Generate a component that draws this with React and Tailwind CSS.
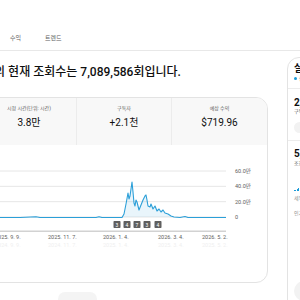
const pts = [
  [-18, 217.5], [20, 217.5], [36, 216.8], [40, 217.5], [96, 217.5], [99, 216.8], [102, 217.5],
  [122, 217.5], [124, 214], [126, 204], [128, 193], [129, 199], [130, 196], [132, 182],
  [133, 192], [134, 203], [135, 206], [136, 200], [137, 202], [139, 210], [141, 205],
  [143, 200], [145, 196], [146, 195], [147, 200], [148, 206], [150, 207], [151, 204],
  [153, 209], [155, 206], [157, 211], [159, 209], [161, 212], [163, 210], [165, 213],
  [168, 214], [171, 216], [174, 217], [180, 217.5], [185, 216.5], [188, 217.5], [226, 217.5],
];

const toSvg = ([x, y]) => [x + 18, y - 167];

const linePath = pts
  .map((p, i) => {
    const [x, y] = toSvg(p);
    return `${i === 0 ? "M" : "L"}${x} ${y}`;
  })
  .join(" ");

const areaPath = `${linePath} L244 50 L0 50 Z`;

const markers = [
  { x: 117, n: "3" },
  { x: 127, n: "4" },
  { x: 137, n: "7" },
  { x: 147, n: "3" },
  { x: 158, n: "4" },
];

const metrics = [
  { label: "시청 시간(단위: 시간)", value: "3.8만" },
  { label: "구독자", value: "+2.1천" },
  { label: "예상 수익", value: "$719.96" },
];

const DateRow = ({ labels, color }) => (
  <div className={`flex w-[244px] pl-[13px] whitespace-nowrap text-[5.5px] leading-[8px] ${color}`}>
    <span className="w-[53px] flex-none">{labels[0]}</span>
    <span className="w-[55px] flex-none">{labels[1]}</span>
    <span className="w-[55px] flex-none">{labels[2]}</span>
    <span className="w-[44px] flex-none">{labels[3]}</span>
    <span className="flex-1 text-right">{labels[4]}</span>
  </div>
);

const ViewsChart = () => (
  <svg width="244" height="66" viewBox="0 0 244 66" className="block">
    {[4, 19.33, 34.67, 50].map((y) => (
      <line key={y} x1="0" x2="244" y1={y} y2={y} stroke="#e6e6e6" strokeWidth="1" />
    ))}
    <path d={areaPath} fill="#2b9fd8" fillOpacity="0.1" />
    <path d={linePath} fill="none" stroke="#2b9fd8" strokeWidth="1.1" strokeLinejoin="round" />
    {markers.map((m) => (
      <g key={m.x}>
        <rect x={m.x + 18 - 3.5} y="54" width="7" height="7" rx="0.8" fill="#5f5f5f" />
        <text
          x={m.x + 18}
          y="59.6"
          textAnchor="middle"
          fontSize="5"
          fill="#fff"
          fontFamily="Roboto, sans-serif"
        >
          {m.n}
        </text>
      </g>
    ))}
    <rect x="0" y="63.5" width="244" height="1.5" fill="#d2d2d2" />
  </svg>
);

export default function App() {
  return (
    <div className="w-[300px] h-[300px] overflow-hidden bg-white text-[#0f0f0f] font-['Roboto','Noto_Sans_CJK_KR',sans-serif]">
      <div className="h-[51px] border-b border-[#e8e8e8] flex items-end gap-[24px] pl-[10px] pb-[8px] text-[6px] leading-[8px] text-[#606060]">
        <span>수익</span>
        <span>트렌드</span>
      </div>

      <div className="flex">
        <div className="w-[287px] flex-none ml-[-19px]">
          <h1 className="mt-[13px] ml-[-9px] text-[12px] leading-[16px] font-medium whitespace-nowrap">
            채널의 현재 조회수는 7,089,586회입니다.
          </h1>

          <div className="mt-[17px] h-[186px] border border-[#e3e3e3] rounded-[12px] overflow-hidden">
            <div className="grid grid-cols-3 h-[47px] bg-[#f8f8f8]">
              {metrics.map((m, i) => (
                <div
                  key={m.label}
                  className={`flex flex-col items-center pt-[7px] ${i < 2 ? "border-r border-[#ececec]" : ""}`}
                >
                  <span className="text-[5px] leading-[7px] text-[#606060]">{m.label}</span>
                  <span className="mt-[5px] text-[10px] leading-[12px]">{m.value}</span>
                </div>
              ))}
            </div>

            <div className="pt-[22px]">
              <div className="flex">
                <ViewsChart />
                <div className="ml-[9px] flex flex-col gap-[7.33px] text-[5.5px] leading-[8px] text-[#606060]">
                  <span>60.0만</span>
                  <span>40.0만</span>
                  <span>20.0만</span>
                  <span>0</span>
                </div>
              </div>
              <DateRow
                labels={["2025. 9. 9.", "2025. 11. 7.", "2026. 1. 4.", "2026. 3. 4.", "2026. 5. 2."]}
                color="text-[#606060]"
              />
              <DateRow
                labels={["2024. 9. 9.", "2024. 11. 7.", "2025. 1. 4.", "2025. 3. 4.", "2025. 5. 2."]}
                color="text-[#efefef]"
              />
            </div>
          </div>

          <div className="mt-[9px] ml-[77px] h-[14px] w-[39px] rounded-full bg-[#f4f4f4]" />
        </div>

        <aside className="ml-[19px] mt-[6px] w-[200px] h-[260px] flex-none border border-[#e3e3e3] rounded-[12px]">
          <div className="pl-[6px] pt-[5px] pb-[6px] border-b border-[#ececec]">
            <div className="text-[10px] leading-[12px] font-bold">실시간</div>
            <div className="flex items-center gap-[2px] text-[5px] leading-[7px] text-[#606060]">
              <span className="w-[3px] h-[3px] rounded-full bg-[#1c9bd8]" />
              실시간 업데이트 중
            </div>
          </div>
          <div className="pl-[6px] pt-[8px] pb-[7px] border-b border-[#ececec]">
            <div className="text-[10px] leading-[11px] font-bold">2,140,582</div>
            <div className="text-[5px] leading-[6px] text-[#606060]">구독자</div>
            <div className="mt-[8px] h-[11px] w-[80px] rounded-full bg-[#f2f2f2]" />
          </div>
          <div className="pl-[6px] pt-[7px]">
            <div className="text-[10px] leading-[12px] font-bold">5,123</div>
            <div className="text-[5px] leading-[6px] text-[#606060]">조회수 · 지난 48시간</div>
            <div className="mt-[21px] flex items-end gap-[0.6px] h-[4px]">
              {[1, 1.5, 2, 3, 2.5, 3.5, 2, 3].map((h, i) => (
                <span key={i} className="w-[0.8px] bg-[#1c9bd8]" style={{ height: `${h}px` }} />
              ))}
            </div>
            <div className="mt-[4px] text-[5px] leading-[6px] text-[#909090]">세부정보</div>
            <div className="mt-[9px] text-[5px] leading-[6px] text-[#909090]">인기 콘텐츠</div>
            <div className="mt-[65px] h-[20px] w-[20px] rounded-full bg-[#f2f2f2]" />
          </div>
        </aside>
      </div>
    </div>
  );
}
